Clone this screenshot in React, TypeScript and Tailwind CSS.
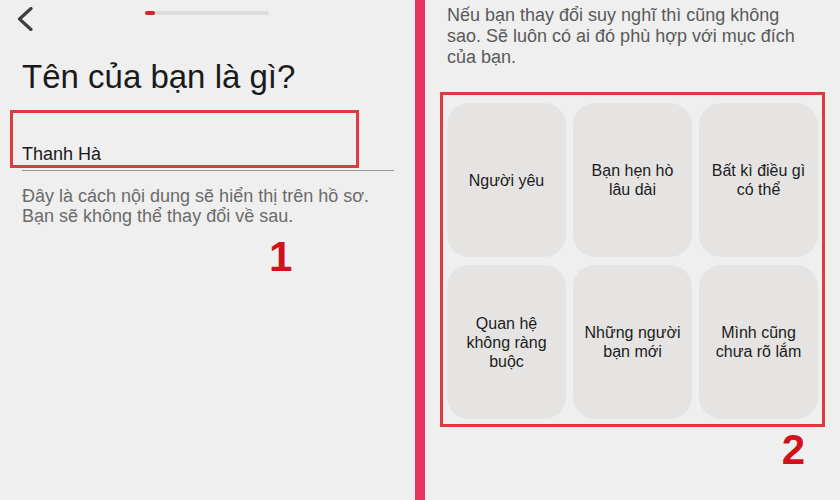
import React from "react";

type Choice = { id: number; lines: string[] };

const choices: Choice[] = [
  { id: 1, lines: ["Người yêu"] },
  { id: 2, lines: ["Bạn hẹn hò", "lâu dài"] },
  { id: 3, lines: ["Bất kì điều gì", "có thể"] },
  { id: 4, lines: ["Quan hệ", "không ràng", "buộc"] },
  { id: 5, lines: ["Những người", "bạn mới"] },
  { id: 6, lines: ["Mình cũng", "chưa rõ lắm"] },
];

function ChoiceCard({ choice }: { choice: Choice }) {
  return (
    <div className="h-[154px] rounded-[22px] bg-[#e6e4e3] flex items-center justify-center text-center text-[16px] leading-[19px] text-[#1c1c1c]">
      <span>
        {choice.lines.map((line, i) => (
          <React.Fragment key={i}>
            {i > 0 && <br />}
            {line}
          </React.Fragment>
        ))}
      </span>
    </div>
  );
}

function NameStep() {
  return (
    <div className="w-[415px] shrink-0 flex flex-col px-[22px] bg-[#efefef]">
      {/* Header: back + progress */}
      <div className="flex items-start h-[31px]">
        <svg
          className="-ml-[5px] mt-[7px] shrink-0"
          width="17"
          height="24"
          viewBox="0 0 17 24"
          fill="none"
        >
          <path
            d="M14 1.5 L2.5 12 L14 22.5"
            stroke="#3f3f3f"
            strokeWidth="3.2"
            strokeLinecap="round"
            strokeLinejoin="round"
          />
        </svg>
        <div className="ml-[111px] mt-[11px] w-[124px] h-[4px] rounded-full bg-[#dcdcdc] flex">
          <div className="w-[10px] h-full rounded-full bg-[#d0262d]" />
        </div>
      </div>

      <h1 className="mt-[26px] text-[33px] leading-[40px] text-[#1a1a1a] font-normal">
        Tên của bạn là gì?
      </h1>

      {/* Name input */}
      <div className="relative pt-[46px] pb-[5px] border-b border-[#9a9a9a] mr-[-1px]">
        <div className="text-[18px] leading-[22px] text-[#1a1a1a]">Thanh Hà</div>
        <div className="absolute top-[13px] -left-[12px] w-[349px] h-[58px] border-[3px] border-[#e03a41]" />
      </div>

      <p className="mt-[15px] text-[18px] leading-[20px] text-[#6b6b6b]">
        Đây là cách nội dung sẽ hiển thị trên hồ sơ.
        <br />
        Bạn sẽ không thể thay đổi về sau.
      </p>

      <div className="mt-[10px] ml-[247px] text-[42px] leading-[42px] font-bold text-[#d3111b]">
        1
      </div>
    </div>
  );
}

function PurposeStep() {
  return (
    <div className="flex-1 flex flex-col pl-[15px] pr-[15px] bg-[#efefef]">
      <p className="pt-[5px] pl-[7px] text-[18px] leading-[21px] text-[#5a5a5a]">
        Nếu bạn thay đổi suy nghĩ thì cũng không
        <br />
        sao. Sẽ luôn có ai đó phù hợp với mục đích
        <br />
        của bạn.
      </p>

      <div className="mt-[24px] border-[3px] border-[#e03a41] pt-[8px] pb-[5px] px-[4px] grid grid-cols-3 gap-x-[7px] gap-y-[8px]">
        {choices.map((c) => (
          <ChoiceCard key={c.id} choice={c} />
        ))}
      </div>

      <div className="mt-[2px] pr-[20px] text-right text-[42px] leading-[42px] font-bold text-[#d3111b]">
        2
      </div>
    </div>
  );
}

export default function App() {
  return (
    <div
      className="w-[840px] h-[500px] overflow-hidden flex bg-[#efefef]"
      style={{ fontFamily: '"Liberation Sans", Arial, sans-serif' }}
    >
      <NameStep />
      <div className="w-[10px] shrink-0 bg-[#e83560]" />
      <PurposeStep />
    </div>
  );
}
